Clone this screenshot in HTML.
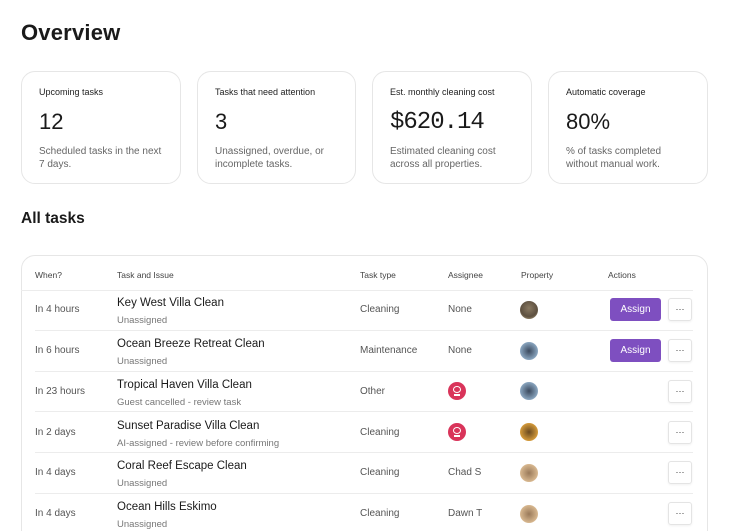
<!DOCTYPE html><html><head><style>
*{margin:0;padding:0;box-sizing:border-box}
html,body{width:729px;height:531px;overflow:hidden}
body{background:#fff;font-family:"Liberation Sans",sans-serif;color:#222;position:relative}
.a{position:absolute;white-space:nowrap}
h1{position:absolute;left:21px;top:20px;font-size:22px;font-weight:600;color:#1a1a1a;letter-spacing:0.2px}
h2{position:absolute;left:21px;top:210px;font-size:15.5px;font-weight:600;color:#1a1a1a}
.card{position:absolute;top:71px;height:113px;border:1px solid #e6e6e6;border-radius:14px}
.card .l{position:absolute;left:17px;top:15px;font-size:9px;color:#222}
.card .n{position:absolute;left:17px;top:37px;font-size:22px;color:#1a1a1a}
.card .d{position:absolute;left:17px;top:73px;font-size:10px;line-height:13px;color:#666;width:128px}
.tbl{position:absolute;left:21px;top:255px;width:687px;height:300px;border:1px solid #e6e6e6;border-radius:14px}
.hd{font-size:8.5px;color:#444;top:270px}
.sep{position:absolute;left:35px;width:658px;height:1px;background:#ececec}
.w{font-size:10px;color:#555}
.t{font-size:11.5px;color:#1a1a1a}
.s{font-size:9.5px;color:#777}
.ty{font-size:10px;color:#555}
.as{position:absolute;left:610px;width:51px;height:23px;background:#7e4fc0;border-radius:3px;color:#fff;font-size:10px;text-align:center;line-height:23px}
.mo{position:absolute;left:668px;width:24px;height:23px;border:1px solid #e4e4e4;border-radius:3px;font-size:9px;text-align:center;line-height:21px;color:#333;box-shadow:0 1px 2px rgba(0,0,0,.06)}
.av{position:absolute;left:448px;width:18px;height:18px;border-radius:50%;background:#d9345a}
.av:after{content:"";position:absolute;left:5px;top:4px;width:8px;height:7px;border:1.5px solid #fff;border-radius:50%;box-sizing:border-box}
.av:before{content:"";position:absolute;left:6px;top:12px;width:6px;height:1.5px;background:#fff}
.pr{position:absolute;left:520px;width:18px;height:18px;border-radius:50%}
</style></head><body>
<h1>Overview</h1>
<div class="card" style="left:21px;width:160px"><div class="l">Upcoming tasks</div><div class="n">12</div><div class="d">Scheduled tasks in the next 7 days.</div></div>
<div class="card" style="left:197px;width:159px"><div class="l">Tasks that need attention</div><div class="n">3</div><div class="d">Unassigned, overdue, or incomplete tasks.</div></div>
<div class="card" style="left:372px;width:160px"><div class="l">Est. monthly cleaning cost</div><div class="n" style="font-family:'Liberation Mono',monospace;font-size:24px;letter-spacing:-1px">$620.14</div><div class="d" style="width:120px">Estimated cleaning cost across all properties.</div></div>
<div class="card" style="left:548px;width:160px"><div class="l">Automatic coverage</div><div class="n">80%</div><div class="d" style="width:125px">% of tasks completed without manual work.</div></div>
<h2>All tasks</h2>
<div class="tbl"></div>
<div class="a hd" style="left:35px">When?</div><div class="a hd" style="left:117px">Task and Issue</div><div class="a hd" style="left:360px">Task type</div><div class="a hd" style="left:448px">Assignee</div><div class="a hd" style="left:521px">Property</div><div class="a hd" style="left:608px">Actions</div>
<div class="sep" style="top:290px;left:21px;width:672px"></div>
<div class="sep" style="top:330px"></div><div class="sep" style="top:371px"></div><div class="sep" style="top:411px"></div><div class="sep" style="top:452px"></div><div class="sep" style="top:493px"></div>

<div class="a w" style="left:35px;top:304px">In 4 hours</div><div class="a t" style="left:117px;top:297px">Key West Villa Clean</div><div class="a s" style="left:117px;top:315px">Unassigned</div><div class="a ty" style="left:360px;top:304px">Cleaning</div><div class="a ty" style="left:448px;top:304px">None</div><div class="pr" style="top:301px;background:radial-gradient(circle at 50% 40%,#8a7a62,#5d5040 60%,#c7b48a)"></div><div class="as" style="top:298px">Assign</div><div class="mo" style="top:298px">···</div>

<div class="a w" style="left:35px;top:345px">In 6 hours</div><div class="a t" style="left:117px;top:338px">Ocean Breeze Retreat Clean</div><div class="a s" style="left:117px;top:356px">Unassigned</div><div class="a ty" style="left:360px;top:345px">Maintenance</div><div class="a ty" style="left:448px;top:345px">None</div><div class="pr" style="top:342px;background:radial-gradient(circle at 50% 50%,#3b4a5e,#8aa6c0 70%)"></div><div class="as" style="top:339px">Assign</div><div class="mo" style="top:339px">···</div>

<div class="a w" style="left:35px;top:386px">In 23 hours</div><div class="a t" style="left:117px;top:379px">Tropical Haven Villa Clean</div><div class="a s" style="left:117px;top:397px">Guest cancelled - review task</div><div class="a ty" style="left:360px;top:386px">Other</div><div class="av" style="top:382px"></div><div class="pr" style="top:382px;background:radial-gradient(circle at 50% 50%,#3b4a5e,#8aa6c0 70%)"></div><div class="mo" style="top:380px">···</div>

<div class="a w" style="left:35px;top:427px">In 2 days</div><div class="a t" style="left:117px;top:420px">Sunset Paradise Villa Clean</div><div class="a s" style="left:117px;top:438px">AI-assigned - review before confirming</div><div class="a ty" style="left:360px;top:427px">Cleaning</div><div class="av" style="top:423px"></div><div class="pr" style="top:423px;background:radial-gradient(circle at 50% 50%,#6a4a20,#d49a3a 70%)"></div><div class="mo" style="top:421px">···</div>

<div class="a w" style="left:35px;top:467px">In 4 days</div><div class="a t" style="left:117px;top:460px">Coral Reef Escape Clean</div><div class="a s" style="left:117px;top:478px">Unassigned</div><div class="a ty" style="left:360px;top:467px">Cleaning</div><div class="a ty" style="left:448px;top:467px">Chad S</div><div class="pr" style="top:464px;background:radial-gradient(circle at 50% 50%,#9a7a5a,#d8b890 70%)"></div><div class="mo" style="top:461px">···</div>

<div class="a w" style="left:35px;top:508px">In 4 days</div><div class="a t" style="left:117px;top:501px">Ocean Hills Eskimo</div><div class="a s" style="left:117px;top:519px">Unassigned</div><div class="a ty" style="left:360px;top:508px">Cleaning</div><div class="a ty" style="left:448px;top:508px">Dawn T</div><div class="pr" style="top:505px;background:radial-gradient(circle at 50% 50%,#9a7a5a,#d8b890 70%)"></div><div class="mo" style="top:502px">···</div>
</body></html>
